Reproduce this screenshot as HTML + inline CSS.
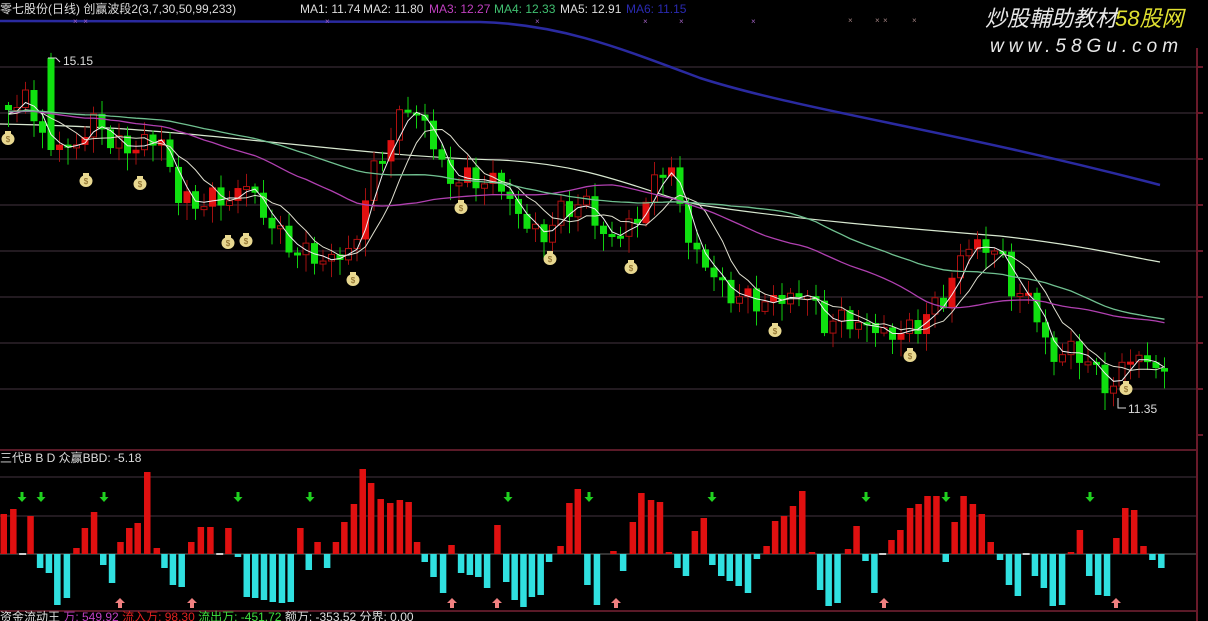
<!DOCTYPE html>
<html><head><meta charset="utf-8"><style>
html,body{margin:0;padding:0;background:#000;width:1208px;height:621px;overflow:hidden}
svg{display:block}
text{font-family:"Liberation Sans","Noto Sans CJK SC",sans-serif}
</style></head><body>
<svg id="s" width="1208" height="621" xmlns="http://www.w3.org/2000/svg">
<rect width="1208" height="621" fill="#000"/>
<g id="grid" stroke="#2a1c22" stroke-width="2"></g>
<line x1="0" y1="450" x2="1197" y2="450" stroke="#5a1a28" stroke-width="2"/>
<line x1="0" y1="611" x2="1197" y2="611" stroke="#5a1a28" stroke-width="2"/>
<line x1="1197" y1="48" x2="1197" y2="621" stroke="#6a1a2a" stroke-width="2"/>
<path d="M0,21 L480,22 C560,24 620,48 700,78 C800,110 950,130 1160,185" fill="none" stroke="#2a2aa0" stroke-width="2.5"/>
<path d="M0,124 C100,126 150,130 250,140 C350,150 420,158 500,160 C600,165 650,195 700,205 C800,220 900,228 1000,236 C1080,245 1120,255 1160,262" fill="none" stroke="#d8e8d0" stroke-width="1.2"/>
<g id="c"></g>
<g id="ma" fill="none"></g>
<g id="low"></g>
<g id="bags"></g>
<text x="0" y="13" font-size="12" fill="#ddd">零七股份(日线) 创赢波段2(3,7,30,50,99,233)</text>
<text x="300" y="13" font-size="12" fill="#ddd">MA1: 11.74</text>
<text x="363" y="13" font-size="12" fill="#ddd">MA2: 11.80</text>
<text x="429" y="13" font-size="12" fill="#c040c0">MA3: 12.27</text>
<text x="494" y="13" font-size="12" fill="#40c070">MA4: 12.33</text>
<text x="560" y="13" font-size="12" fill="#ddd">MA5: 12.91</text>
<text x="626" y="13" font-size="12" fill="#2a2ab0">MA6: 11.15</text>
<text x="985" y="26" font-size="22" font-style="italic" fill="#e8e8e8">炒股輔助教材</text>
<text x="1115" y="26" font-size="22" font-style="italic" fill="#e0e030">58股网</text>
<text x="990" y="52" font-size="19" font-style="italic" fill="#e8e8e8" letter-spacing="5">www.58Gu.com</text>
<path d="M48,58 L56,58 L60,62" stroke="#ddd" fill="none"/>
<text x="63" y="65" font-size="12" fill="#ddd">15.15</text>
<path d="M1118,398 L1118,408 L1126,408" stroke="#ddd" fill="none"/>
<text x="1128" y="413" font-size="12" fill="#ddd">11.35</text>
<text x="0" y="462" font-size="12" fill="#ddd">三代B B D 众赢BBD: -5.18</text>
<text x="0" y="621" font-size="12"><tspan fill="#ddd">资金流动王 </tspan><tspan fill="#c040c0">万: 549.92 </tspan><tspan fill="#e02020">流入万: 98.30 </tspan><tspan fill="#40e040">流出万: -451.72 </tspan><tspan fill="#ddd">额万: -353.52 分界: 0.00</tspan></text>
</svg>
<script>
(function(){
var NS="http://www.w3.org/2000/svg";
function el(p,t,a){var e=document.createElementNS(NS,t);for(var k in a)e.setAttribute(k,a[k]);p.appendChild(e);return e;}
var S=document.getElementById('s');
var G=document.getElementById('grid');
[67,113,159,205,251,297,343,389,477,516,554].forEach(function(y){el(G,'line',{x1:0,y1:y,x2:1197,y2:y,stroke:y==554?'#333':'#221a20'});});
for(var y=67;y<440;y+=46)el(G,'line',{x1:1197,y1:y,x2:1203,y2:y,stroke:'#6a1a2a'});
[5,22,425,775,955,1015,1135].forEach(function(x){var t=el(S,'text',{x:x*0.6+70,y:24,'font-size':8,fill:'#a060c0'});t.textContent='×';});
[848,875,883,912].forEach(function(x){var t=el(S,'text',{x:x,y:23,'font-size':8,fill:'#a08080'});t.textContent='×';});
var K=[[5,105],[20,100],[40,128],[55,140],[70,150],[95,115],[110,150],[130,145],[160,140],[175,200],[200,202],[235,195],[245,180],[260,215],[280,240],[300,255],[330,260],[350,250],[365,185],[380,150],[405,105],[420,120],[435,160],[450,182],[470,178],[500,186],[520,225],[540,235],[560,210],[580,200],[600,235],[620,235],[640,205],[655,180],[665,150],[680,230],[700,262],[720,290],[750,302],[780,300],[800,290],[820,322],[850,320],[870,330],[900,335],[940,300],[960,250],[980,242],[1000,262],[1010,290],[1030,305],[1050,362],[1070,345],[1090,372],[1110,388],[1125,355],[1145,360],[1160,378]];
function f(x){for(var i=0;i<K.length-1;i++){if(x<=K[i+1][0]){var t=(x-K[i][0])/(K[i+1][0]-K[i][0]);return K[i][1]+t*(K[i+1][1]-K[i][1]);}}return K[K.length-1][1];}
var C=document.getElementById('c'),closes=[],xs=[];
for(var i=0;i<60;i++)closes.push(i<40?110:110+(i-40)*0.3);
var prev=105;
for(var i=0;i<137;i++){
 var x=5+8.5*i, c=f(x)+(Math.sin(i*2.3)*8+Math.cos(i*1.7)*5);
 var o=prev; if(i==5){o=58;c=150;}
 var tp=Math.min(o,c),bt=Math.max(o,c); if(bt-tp<3)bt=tp+3;
 var hi=tp-3-Math.abs(Math.sin(i*1.3))*10, lo=bt+3+Math.abs(Math.cos(i*0.9))*14;
 var up=c<o;
 el(C,'line',{x1:x+3.5,y1:hi,x2:x+3.5,y2:lo,stroke:up?'#a01010':'#10d010'});
 if(up&&i%3!=0)el(C,'rect',{x:x+.5,y:tp,width:6,height:bt-tp,fill:'#000',stroke:'#b01010'});
 else el(C,'rect',{x:x,y:tp,width:7,height:bt-tp,fill:up?'#e01010':'#10e010'});
 closes.push(c);xs.push(x+3.5);prev=c;
}
function ma(n,col,w){var d='';for(var i=0;i<137;i++){var s=0;for(var j=0;j<n;j++)s+=closes[60+i-j];s/=n;d+=(i?'L':'M')+xs[i].toFixed(1)+','+s.toFixed(1);}el(document.getElementById('ma'),'path',{d:d,stroke:col,'stroke-width':w});}
ma(3,'#f0f0f0',1);ma(7,'#e0e0d0',1);ma(30,'#b040b0',1.3);ma(50,'#70c090',1.3);
var A=[0,25,50,70,95,118,140,165,190,212,236,260,283,305,328,350,375,400,420,442,465,490,515,540,565,587,612,635,657,680,703,727,750,775,797,820,845,868,890,915,938,960,985,1010,1035,1058,1080,1100,1123,1148,1170,1195,1218,1240,1263,1290,1313,1335,1358,1380,1403,1425,1455,1478,1500,1525,1550];
var AV=[40,45,0,38,-14,-19,-51,-44,6,26,42,-11,-29,12,26,31,82,6,-14,-31,-33,12,27,27,0,26,-3,-43,-44,-46,-48,-49,-48,26,-16,12,-14,12,32,50,85,71,55,51,54,52,12,-8,-23,-39,9,-19,-21,-23,-34,29,-28,-46,-53,-43,-41,-8,8,51,65,-31,-51];
var B=[[25,3],[50,-17],[75,32],[97,61],[122,54],[145,52],[168,2],[190,-14],[212,-22],[235,23],[258,36],[280,-11],[303,-22],[325,-27],[348,-32],[372,-39],[395,-5],[420,8],[442,33],[465,38],[488,48],[512,63],[537,2],[558,-36],[580,-52],[603,-49],[630,5],[652,28],[675,-7],[698,-39],[720,0],[742,14],[765,24],[790,46],[812,50],[835,58],[858,58],[882,-8],[905,32],[928,58],[952,50],[975,40],[998,12],[1022,-6],[1045,-31],[1068,-42],[1090,0],[1112,-22],[1135,-34],[1158,-52],[1182,-51],[1205,2],[1228,24],[1252,-22],[1275,-41],[1298,-42],[1322,16],[1345,46],[1368,44],[1392,8],[1415,-6],[1438,-14]];
var L=document.getElementById('low'),bars=[];
A.forEach(function(z,i){bars.push([z/2.613,AV[i]]);});
B.forEach(function(p){bars.push([600+p[0]/2.579,p[1]]);});
bars.forEach(function(b){var x=b[0],v=b[1];
 if(v==0)el(L,'rect',{x:x,y:553,width:7,height:2,fill:'#ccc'});
 else if(v>0)el(L,'rect',{x:x+.5,y:554-v,width:6.5,height:v,fill:'#e01010'});
 else el(L,'rect',{x:x+.5,y:554,width:6.5,height:-v,fill:'#30e0e0'});});
[22,41,104,238,310,508,589,712,866,946,1090].forEach(function(x){el(L,'path',{d:'M'+(x-1.5)+',492 h3 v5 h3 l-4.5,5 l-4.5,-5 h3 z',fill:'#20d020'});});
[120,192,452,497,616,884,1116].forEach(function(x){el(L,'path',{d:'M'+x+',598 l5,5 h-3 v5 h-4 v-5 h-3 z',fill:'#f08080'});});
var BG=document.getElementById('bags');
[[8,138],[86,180],[140,183],[228,242],[246,240],[353,279],[461,207],[550,258],[631,267],[775,330],[910,355],[1126,388]].forEach(function(p){
 el(BG,'ellipse',{cx:p[0],cy:p[1]+1,rx:6.5,ry:6,fill:'#e8d890'});
 el(BG,'rect',{x:p[0]-3,y:p[1]-7,width:6,height:3,fill:'#e8d890'});
 var t=el(BG,'text',{x:p[0],y:p[1]+4,'font-size':8,'text-anchor':'middle',fill:'#806020'});t.textContent='$';});
})();
</script>
</body></html>
